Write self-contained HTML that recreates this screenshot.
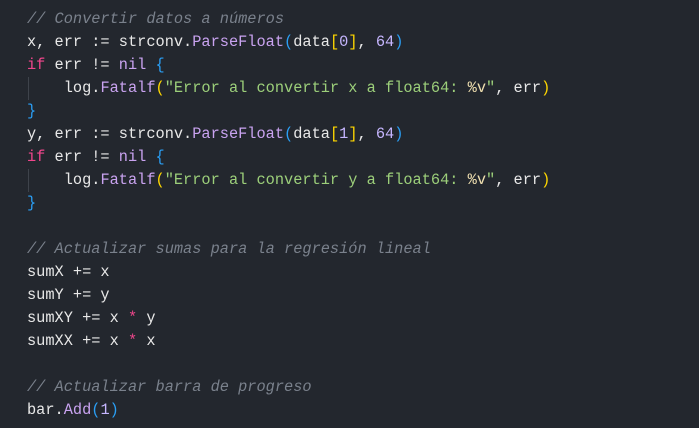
<!DOCTYPE html>
<html><head><meta charset="utf-8"><style>
html,body{margin:0;padding:0;background:#23272e;width:699px;height:428px;overflow:hidden}
pre{margin:0;position:absolute;left:27px;top:8px;font-family:"Liberation Mono",monospace;font-size:15.3px;line-height:23px;color:#e8e8e8;white-space:pre}
.c{color:#7a818c;font-style:italic}
.k{color:#f0468c}
.f{color:#c9a3f0}
.s{color:#9ccf7a}
.n{color:#c6b6ff}
.y{color:#ffd700}
.b{color:#2a9ff5}
.g{position:absolute;left:28px;width:1px;height:23px;background:#3e434b}
</style></head><body>
<div class="g" style="top:77px"></div>
<div class="g" style="top:169px"></div>
<pre><span class="c">// Convertir datos a números</span>
x, err := strconv.<span class="f">ParseFloat</span><span class="b">(</span>data<span class="y">[</span><span class="n">0</span><span class="y">]</span>, <span class="n">64</span><span class="b">)</span>
<span class="k">if</span> err != <span class="f">nil</span> <span class="b">{</span>
    log.<span class="f">Fatalf</span><span class="y">(</span><span class="s">"Error al convertir x a float64: </span><span style="color:#f0e0b0">%v</span><span class="s">"</span>, err<span class="y">)</span>
<span class="b">}</span>
y, err := strconv.<span class="f">ParseFloat</span><span class="b">(</span>data<span class="y">[</span><span class="n">1</span><span class="y">]</span>, <span class="n">64</span><span class="b">)</span>
<span class="k">if</span> err != <span class="f">nil</span> <span class="b">{</span>
    log.<span class="f">Fatalf</span><span class="y">(</span><span class="s">"Error al convertir y a float64: </span><span style="color:#f0e0b0">%v</span><span class="s">"</span>, err<span class="y">)</span>
<span class="b">}</span>

<span class="c">// Actualizar sumas para la regresión lineal</span>
sumX += x
sumY += y
sumXY += x <span class="k">*</span> y
sumXX += x <span class="k">*</span> x

<span class="c">// Actualizar barra de progreso</span>
bar.<span class="f">Add</span><span class="b">(</span><span class="n">1</span><span class="b">)</span></pre>
</body></html>
